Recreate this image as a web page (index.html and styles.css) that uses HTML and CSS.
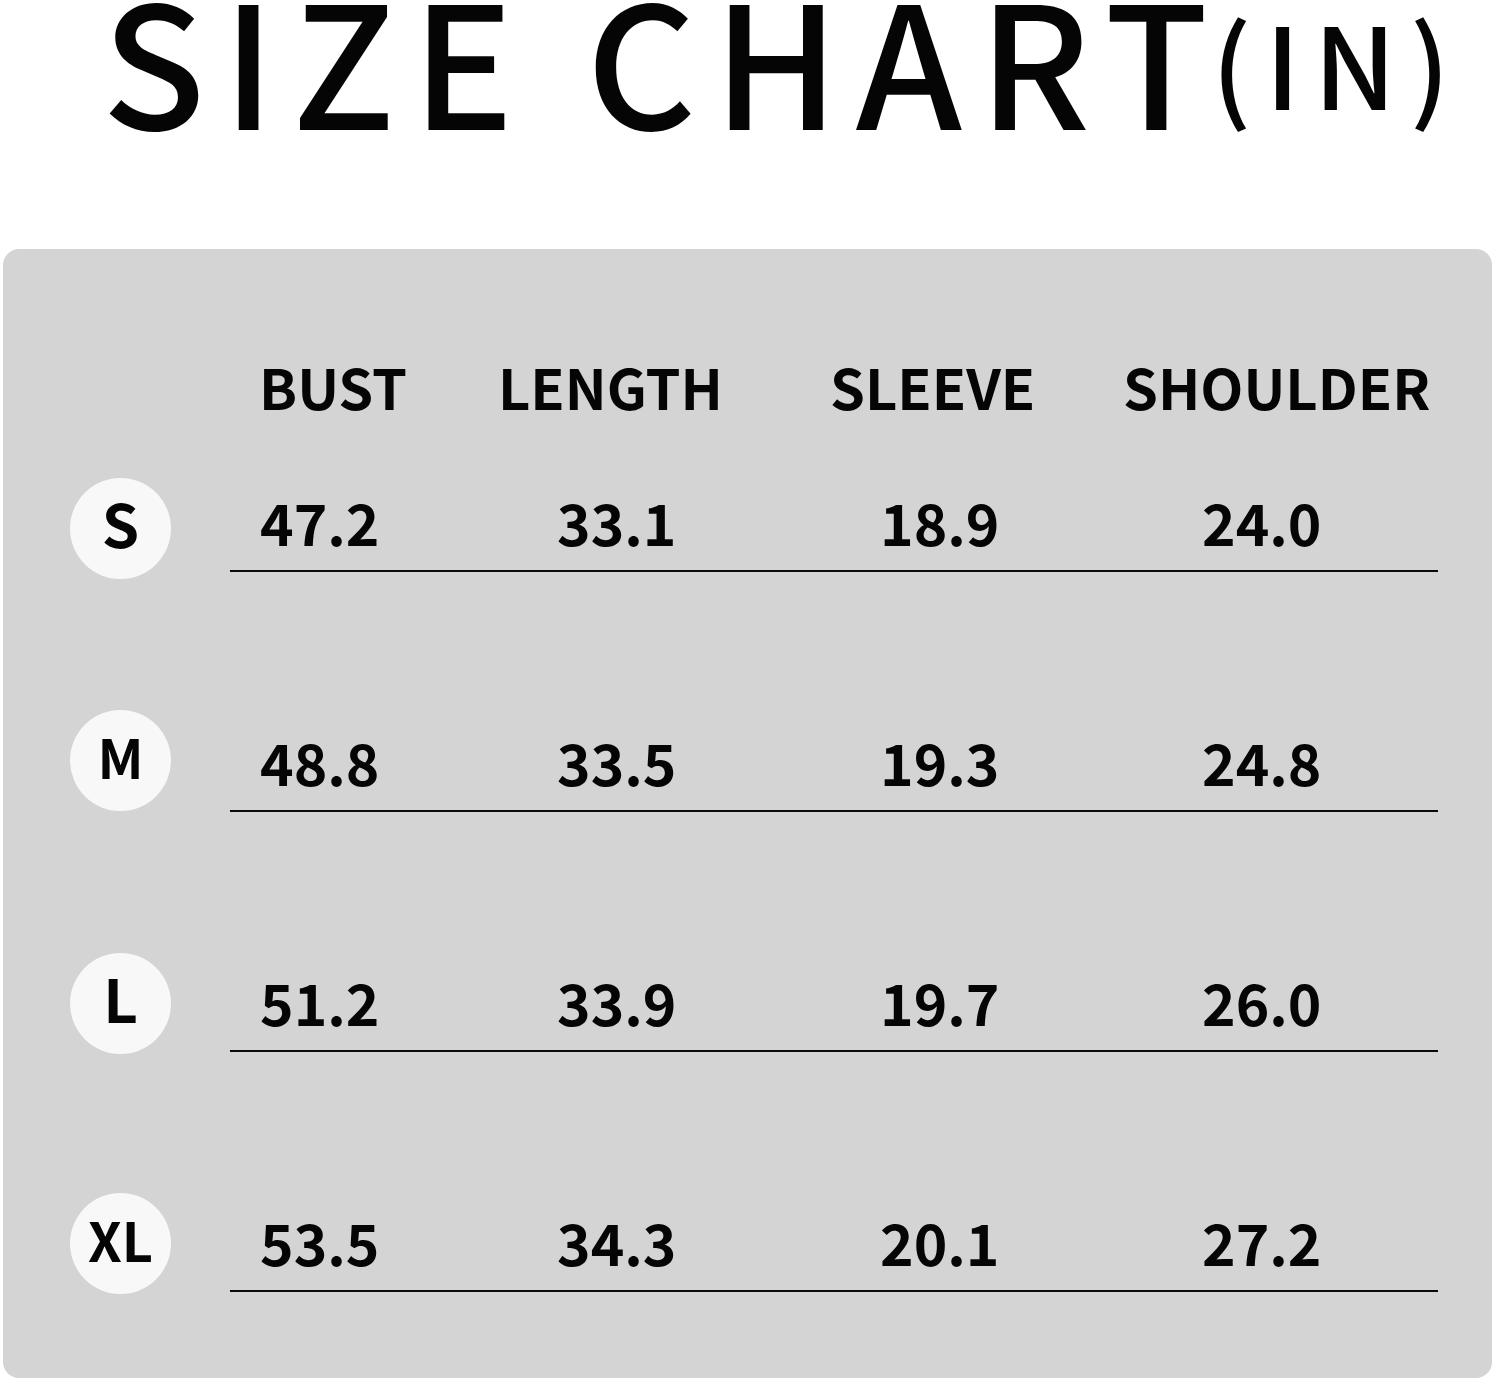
FILE: index.html
```html
<!DOCTYPE html>
<html lang="en">
<head>
<meta charset="utf-8">
<title>Size Chart</title>
<link rel="stylesheet" href="styles.css">
</head>
<body>
<div class="page">
  <h1 class="title">SIZE CHART<span class="unit">(IN)</span></h1>
  <div class="panel">
    <div class="head">
      <div class="hcell h1">BUST</div>
      <div class="hcell h2">LENGTH</div>
      <div class="hcell h3">SLEEVE</div>
      <div class="hcell h4">SHOULDER</div>
    </div>
    <div class="rows">
      <div class="row">
        <div class="badge"><span>S</span></div>
        <div class="vals">
          <div class="v c1">47.2</div>
          <div class="v c2">33.1</div>
          <div class="v c3">18.9</div>
          <div class="v c4">24.0</div>
        </div>
      </div>
      <div class="row">
        <div class="badge small up8"><span>M</span></div>
        <div class="vals">
          <div class="v c1">48.8</div>
          <div class="v c2">33.5</div>
          <div class="v c3">19.3</div>
          <div class="v c4">24.8</div>
        </div>
      </div>
      <div class="row">
        <div class="badge up5"><span>L</span></div>
        <div class="vals">
          <div class="v c1">51.2</div>
          <div class="v c2">33.9</div>
          <div class="v c3">19.7</div>
          <div class="v c4">26.0</div>
        </div>
      </div>
      <div class="row">
        <div class="badge small up5"><span>XL</span></div>
        <div class="vals">
          <div class="v c1">53.5</div>
          <div class="v c2">34.3</div>
          <div class="v c3">20.1</div>
          <div class="v c4">27.2</div>
        </div>
      </div>
    </div>
  </div>
</div>
</body>
</html>
```

FILE: styles.css
```css
html, body {
  margin: 0;
  padding: 0;
  background: #ffffff;
}
body {
  font-family: "Noto Sans CJK SC", "Noto Sans", sans-serif;
  color: #050505;
}
.page {
  width: 1494px;
  height: 1381px;
  overflow: hidden;
}
.title {
  margin: 0;
  height: 249px;
  padding-left: 102px;
  font-size: 170px;
  font-weight: 500;
  line-height: 112px;
  letter-spacing: 17px;
  white-space: nowrap;
  box-sizing: border-box;
}
.unit {
  margin-left: -14px;
  font-size: 112px;
  letter-spacing: 14px;
  vertical-align: 20px;
}
.panel {
  margin-left: 3px;
  width: 1489px;
  height: 1129px;
  background: #d4d4d4;
  border-radius: 16px;
  box-sizing: border-box;
}
.head {
  margin-left: 227px;
  width: 1208px;
  height: 229px;
  padding-top: 109px;
  box-sizing: border-box;
  display: grid;
  grid-template-columns: 253px 340px 290px 325px;
}
.hcell {
  font-size: 56px;
  font-weight: 700;
  line-height: 56px;
  white-space: nowrap;
}
.h1 { padding-left: 29px; }
.h2 { padding-left: 15px; }
.h3 { padding-left: 7px; }
.h4 { padding-left: 10px; }
.rows {
  display: flex;
  flex-direction: column;
  gap: 139px;
}
.row {
  display: grid;
  grid-template-columns: 227px 1208px;
  grid-template-rows: 101px;
  align-items: start;
}
.badge {
  margin-left: 67px;
  width: 101px;
  height: 101px;
  border-radius: 50%;
  background: #f8f8f8;
  display: flex;
  align-items: center;
  justify-content: center;
  font-size: 60px;
  font-weight: 700;
  line-height: 60px;
}
.badge.up8 { margin-top: -8px; }
.badge.up5 { margin-top: -5px; }
.badge span {
  padding-bottom: 14px;
}
.badge.small {
  font-size: 54px;
}
.badge.small span {
  padding-bottom: 10px;
}
.vals {
  padding-top: 14px;
  box-sizing: border-box;
  border-bottom: 2px solid #0a0a0a;
  height: 94px;
  display: grid;
  grid-template-columns: 253px 340px 290px 325px;
}
.v {
  font-size: 57px;
  font-weight: 700;
  line-height: 58px;
  white-space: nowrap;
}
.c1 { padding-left: 30px; }
.c2 { padding-left: 74px; }
.c3 { padding-left: 57px; }
.c4 { padding-left: 89px; }
```
